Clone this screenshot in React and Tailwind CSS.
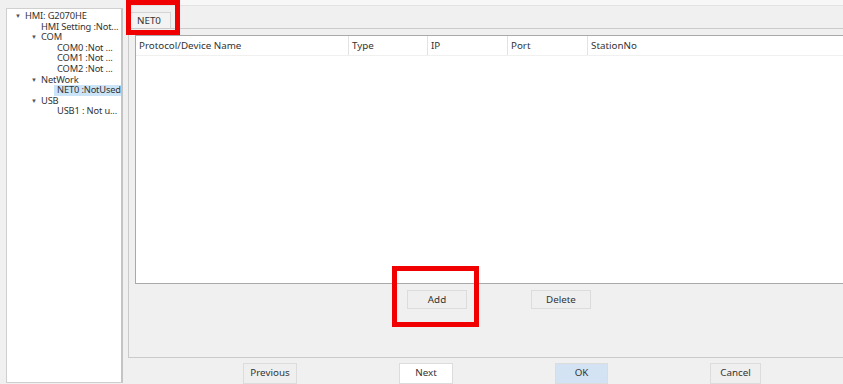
const tree = [
  { label: 'HMI: G2070HE', indent: 25, arrow: true },
  { label: 'HMI Setting :Not...', indent: 41 },
  { label: 'COM', indent: 41, arrow: true },
  { label: 'COM0 :Not ...', indent: 57 },
  { label: 'COM1 :Not ...', indent: 57 },
  { label: 'COM2 :Not ...', indent: 57 },
  { label: 'NetWork', indent: 41, arrow: true },
  { label: 'NET0 :NotUsed', indent: 57, selected: true },
  { label: 'USB', indent: 41, arrow: true },
  { label: 'USB1 : Not u...', indent: 57 },
];

const columns = [
  { name: 'Protocol/Device Name', w: 'w-[213px]' },
  { name: 'Type', w: 'w-[79px]' },
  { name: 'IP', w: 'w-[80px]' },
  { name: 'Port', w: 'w-[80px]' },
  { name: 'StationNo', w: 'w-[300px]' },
];

function Btn({ children, className = '' }) {
  return (
    <div className={`h-[19px] flex items-center justify-center border border-[#dcdcdc] text-[9.8px] text-[#333] ${className}`}>
      {children}
    </div>
  );
}

export default function App() {
  return (
    <div className="relative w-[843px] h-[384px] overflow-hidden bg-[#f0f0f0] flex font-['Noto_Sans',sans-serif]">
      {/* tree */}
      <div className="ml-[6px] mt-[8px] w-[117px] h-[375px] bg-white border border-[#cfcfcf] border-r-2 border-r-[#c4c4c4] pt-[2px] shrink-0 overflow-hidden">
        {tree.map((t) => (
          <div key={t.label} className="relative h-[10.6px] flex items-center text-[9.3px] tracking-[-0.15px] leading-[10.6px] text-[#333] whitespace-nowrap">
            {t.arrow && (
              <span className="absolute text-[6px] leading-[10.6px] text-[#555]" style={{ left: t.indent - 17 }}>▼</span>
            )}
            <span
              className={t.selected ? 'bg-[#cce4f7] h-[11px] flex items-center pl-[3px] w-full' : ''}
              style={{ marginLeft: t.indent - 7 - (t.selected ? 3 : 0) }}
            >
              {t.label}
            </span>
          </div>
        ))}
      </div>

      {/* right side */}
      <div className="ml-[5px] flex-1 flex flex-col">
        <div className="h-[12px] border-t-[5px] border-t-[#f7f7f7]">
          <div className="h-px bg-[#e2e2e2]" />
        </div>
        <div className="h-[346px] flex flex-col">
          <div className="h-[16px] flex">
            <div className="w-[43px] h-[16px] border border-b-0 border-[#d4d4d4] bg-[#f3f3f3] flex items-center pl-[8px] pt-[1px] text-[9.8px] text-[#333]">
              NET0
            </div>
          </div>
          <div className="flex-1 border-t border-l border-b border-[#cacaca] px-[6px] pt-[6px] flex flex-col">
            <div className="h-[249px] border border-[#a9a9a9] border-r-0 bg-white">
              <div className="h-[20px] flex border-b border-[#f0f0f0]">
                {columns.map((c) => (
                  <div key={c.name} className={`${c.w} shrink-0 border-r border-[#e3e3e3] flex items-center pl-[3px] pt-[2px] text-[9.8px] text-[#333]`}>
                    {c.name}
                  </div>
                ))}
              </div>
            </div>
            <div className="flex mt-[6px]">
              <Btn className="ml-[272px] w-[60px] bg-[#efefef] pt-[1px]">Add</Btn>
              <Btn className="ml-[64px] w-[60px] bg-[#efefef] pt-[1px]">Delete</Btn>
            </div>
          </div>
        </div>
        <div className="flex mt-[5px] gap-[102px] pl-[115px]">
          <Btn className="w-[54px] h-[21px] bg-[#efefef]">Previous</Btn>
          <Btn className="w-[54px] h-[21px] bg-white text-[#8a8a8a]">Next</Btn>
          <Btn className="w-[53px] h-[21px] bg-[#d4e3f3] border-[#d4e3f3]">OK</Btn>
          <Btn className="w-[51px] h-[21px] bg-[#efefef]">Cancel</Btn>
        </div>
      </div>

      {/* red highlight boxes */}
      <div className="absolute left-[126px] top-0 w-[54px] h-[35px] border-[5px] border-[#f00000]" />
      <div className="absolute left-[392px] top-[266px] w-[87px] h-[61px] border-[5px] border-[#f00000]" />
    </div>
  );
}
